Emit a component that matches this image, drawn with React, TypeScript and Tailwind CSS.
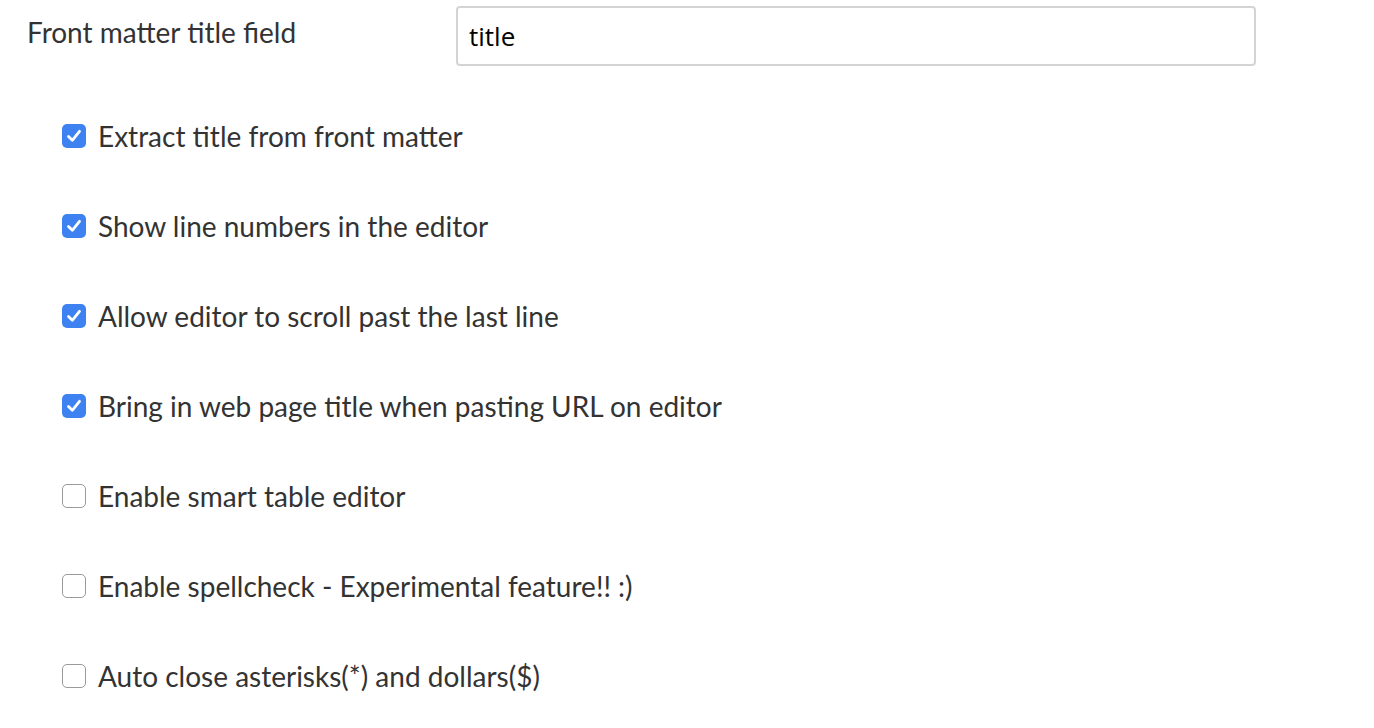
import React from 'react';

const options = [
  { label: 'Extract title from front matter', checked: true },
  { label: 'Show line numbers in the editor', checked: true },
  { label: 'Allow editor to scroll past the last line', checked: true },
  { label: 'Bring in web page title when pasting URL on editor', checked: true },
  { label: 'Enable smart table editor', checked: false },
  { label: 'Enable spellcheck - Experimental feature!! :)', checked: false },
  { label: 'Auto close asterisks(*) and dollars($)', checked: false },
];

const Checkbox = ({ checked }: { checked: boolean }) =>
  checked ? (
    <span className="flex h-[24px] w-[24px] shrink-0 items-center justify-center rounded-[5px] bg-[#3d82f0]">
      <svg className="h-[20px] w-[20px]" viewBox="0 0 20 20" fill="none" stroke="white" strokeWidth={2.8} strokeLinecap="round" strokeLinejoin="round">
        <path d="M4.5 10.5l3.8 3.8 7.2-9" />
      </svg>
    </span>
  ) : (
    <span className="h-[24px] w-[24px] shrink-0 rounded-[5px] border-[1.5px] border-[#9a9a9a] bg-white" />
  );

export default function App() {
  const [title, setTitle] = React.useState('title');
  const [state, setState] = React.useState(options.map((o) => o.checked));

  return (
    <div className="min-h-screen bg-white font-['Lato','Noto_Sans',sans-serif] text-[#333]">
      <div className="flex items-start pl-[27px] pt-[6px]">
        <label className="w-[429px] pt-[7px] text-[28px] leading-[38px]">Front matter title field</label>
        <input
          value={title}
          onChange={(e) => setTitle(e.target.value)}
          className="h-[60px] w-[800px] rounded-[4px] border-2 border-[#d4d4d4] bg-white px-[11px] font-['Open_Sans','Noto_Sans',sans-serif] text-[26px] text-black outline-none"
        />
      </div>

      <div className="flex flex-col pl-[62px] pt-[25px]">
        {options.map((o, i) => (
          <label
            key={o.label}
            className="flex h-[90px] cursor-pointer items-center gap-[12px]"
            onClick={() => setState((s) => s.map((v, j) => (j === i ? !v : v)))}
          >
            <Checkbox checked={state[i]} />
            <span className="text-[28px] leading-[38px]">{o.label}</span>
          </label>
        ))}
      </div>
    </div>
  );
}
